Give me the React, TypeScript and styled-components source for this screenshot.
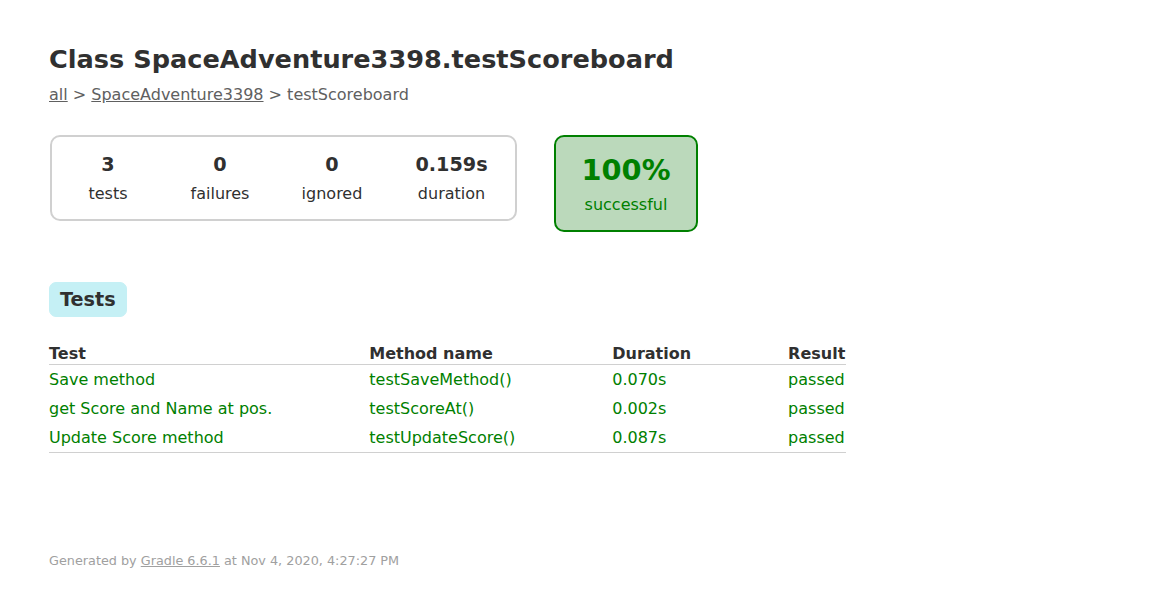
import React from "react";
import styled, { createGlobalStyle } from "styled-components";

const GlobalStyle = createGlobalStyle`
  html, body {
    margin: 0;
    padding: 0;
    background: #ffffff;
  }
  body {
    font-family: "DejaVu Sans", Verdana, sans-serif;
    font-size: 16px;
    color: #303030;
  }
`;

const Content = styled.div`
  padding: 30px 50px 30px 49px;
`;

const Title = styled.h1`
  font-size: 25.6px;
  font-weight: bold;
  margin: 14px 0 11px;
  white-space: nowrap;
`;

const Breadcrumbs = styled.div`
  color: #606060;
`;

const CrumbLink = styled.a`
  color: #606060;
  text-decoration: underline;
`;

const Summary = styled.div`
  display: flex;
  align-items: flex-start;
  margin: 31px 0 40px;
  padding: 0 1px;
`;

const SummaryGroup = styled.div`
  display: flex;
  border: solid 2px #d0d0d0;
  border-radius: 10px;
`;

const InfoBox = styled.div<{ $w: number }>`
  width: ${(p) => p.$w}px;
  margin: 1px;
  padding: 15px 0;
  text-align: center;
`;

const Counter = styled.div`
  font-size: 19.2px;
  font-weight: bold;
  margin-bottom: 8px;
`;

const Label = styled.p`
  margin: 0;
`;

const SuccessRate = styled.div`
  width: 140px;
  margin-left: 37px;
  padding: 16px 0;
  text-align: center;
  color: #008000;
  background-color: #bbd9bb;
  border: solid 2px #008000;
  border-radius: 10px;
`;

const Percent = styled.div`
  font-size: 28.8px;
  font-weight: bold;
  margin-bottom: 8px;
`;

const TabLinks = styled.ul`
  display: flex;
  margin: 0 0 16px;
  padding: 10px 0;
  list-style: none;
`;

const TabItem = styled.li<{ $selected?: boolean }>`
  padding: 5px 10px;
  margin-right: 25px;
  border-radius: 7px;
  border: solid 1px ${(p) => (p.$selected ? "#c5f0f5" : "#d4d4d4")};
  background-color: ${(p) => (p.$selected ? "#c5f0f5" : "#f0f0f0")};
`;

const TabLink = styled.a`
  display: block;
  font-size: 19.2px;
  font-weight: bold;
  color: #303030;
  text-decoration: none;
`;

const Table = styled.table`
  border-collapse: collapse;
  min-width: 350px;
  border-bottom: solid #d0d0d0 1px;
`;

const Th = styled.th`
  text-align: left;
  white-space: nowrap;
  padding: 1px 1px 1px 96px;
  border-bottom: solid #d0d0d0 1px;
  &:first-child {
    padding-left: 0;
  }
`;

const Td = styled.td`
  white-space: nowrap;
  padding: 5px 1px 5px 96px;
  color: #008000;
  &:first-child {
    padding-left: 0;
  }
`;

const Footer = styled.div`
  margin-top: 100px;
  font-size: 12.8px;
  color: #a0a0a0;
  white-space: nowrap;
`;

const FooterText = styled.p`
  margin: 0;
`;

const FooterLink = styled.a`
  color: #a0a0a0;
  text-decoration: underline;
`;

const stats = [
  { value: "3", label: "tests", w: 110 },
  { value: "0", label: "failures", w: 110 },
  { value: "0", label: "ignored", w: 110 },
  { value: "0.159s", label: "duration", w: 125 },
];

const rows = [
  ["Save method", "testSaveMethod()", "0.070s", "passed"],
  ["get Score and Name at pos.", "testScoreAt()", "0.002s", "passed"],
  ["Update Score method", "testUpdateScore()", "0.087s", "passed"],
];

export default function App() {
  return (
    <>
      <GlobalStyle />
      <Content>
        <Title>Class SpaceAdventure3398.testScoreboard</Title>
        <Breadcrumbs>
          <CrumbLink href="#">all</CrumbLink> &gt;{" "}
          <CrumbLink href="#">SpaceAdventure3398</CrumbLink> &gt; testScoreboard
        </Breadcrumbs>
        <Summary>
          <SummaryGroup>
            {stats.map((s) => (
              <InfoBox key={s.label} $w={s.w}>
                <Counter>{s.value}</Counter>
                <Label>{s.label}</Label>
              </InfoBox>
            ))}
          </SummaryGroup>
          <SuccessRate>
            <Percent>100%</Percent>
            <Label>successful</Label>
          </SuccessRate>
        </Summary>
        <TabLinks>
          <TabItem $selected>
            <TabLink href="#tab0">Tests</TabLink>
          </TabItem>
        </TabLinks>
        <Table>
          <thead>
            <tr>
              <Th>Test</Th>
              <Th>Method name</Th>
              <Th>Duration</Th>
              <Th>Result</Th>
            </tr>
          </thead>
          <tbody>
            {rows.map((r) => (
              <tr key={r[1]}>
                {r.map((c, i) => (
                  <Td key={i}>{c}</Td>
                ))}
              </tr>
            ))}
          </tbody>
        </Table>
        <Footer>
          <FooterText>
            Generated by <FooterLink href="#">Gradle 6.6.1</FooterLink> at Nov 4, 2020, 4:27:27 PM
          </FooterText>
        </Footer>
      </Content>
    </>
  );
}
